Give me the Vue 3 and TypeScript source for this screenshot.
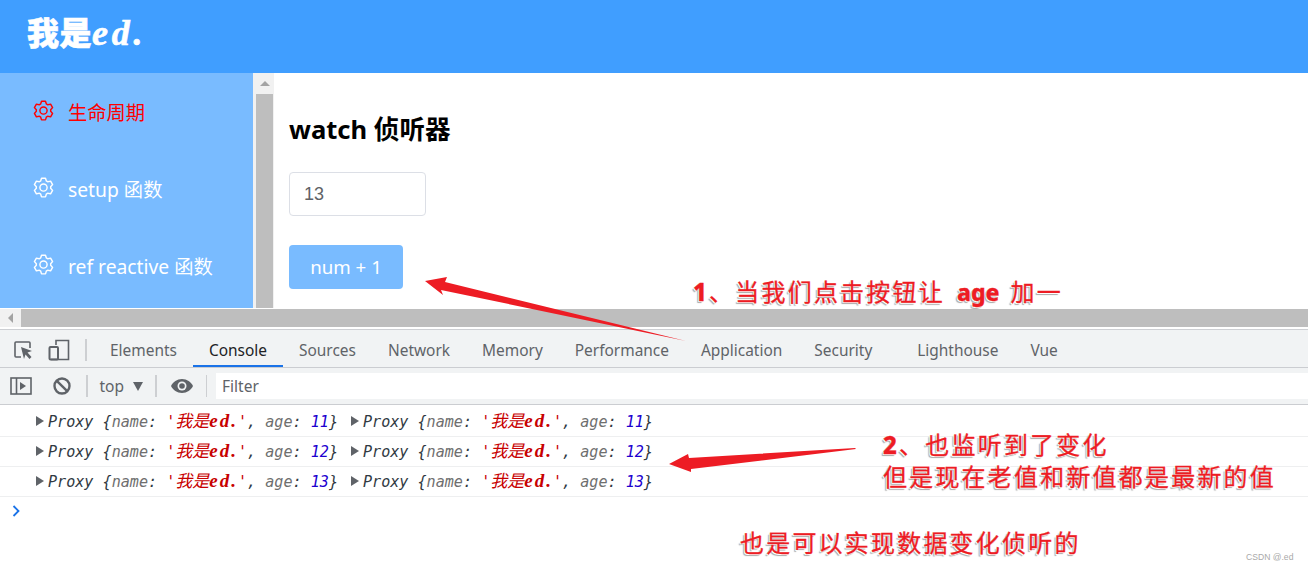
<script setup lang="ts">
import { ref } from 'vue'
const gear = 'M600.704 64a32 32 0 0 1 30.464 22.208l35.2 109.376c14.784 7.232 28.928 15.36 42.432 24.512l112.384-24.192a32 32 0 0 1 34.432 15.36L944.32 364.8a32 32 0 0 1-4.032 37.504l-77.12 85.12a357.12 357.12 0 0 1 0 49.024l77.12 85.248a32 32 0 0 1 4.032 37.504l-88.704 153.6a32 32 0 0 1-34.432 15.296L708.8 803.904c-13.44 9.088-27.648 17.28-42.368 24.512l-35.264 109.376A32 32 0 0 1 600.704 960H423.296a32 32 0 0 1-30.464-22.208L357.696 828.48a351.616 351.616 0 0 1-42.56-24.64l-112.32 24.256a32 32 0 0 1-34.432-15.36L79.68 659.2a32 32 0 0 1 4.032-37.504l77.12-85.248a357.12 357.12 0 0 1 0-48.896l-77.12-85.248A32 32 0 0 1 79.68 364.8l88.704-153.6a32 32 0 0 1 34.432-15.296l112.32 24.256c13.568-9.152 27.776-17.408 42.56-24.64l35.2-109.312A32 32 0 0 1 423.232 64H600.64zm-23.424 64H446.72l-36.352 113.088-24.512 11.968a294.113 294.113 0 0 0-34.816 20.096l-22.656 15.36-116.224-25.088-65.28 113.152 79.68 88.192-1.92 27.136a293.12 293.12 0 0 0 0 40.192l1.92 27.136-79.808 88.192 65.344 113.152 116.224-25.024 22.656 15.296a294.113 294.113 0 0 0 34.816 20.096l24.512 11.968L446.72 896h130.688l36.48-113.152 24.448-11.904a288.282 288.282 0 0 0 34.752-20.096l22.592-15.296 116.288 25.024 65.28-113.152-79.744-88.192 1.92-27.136a293.12 293.12 0 0 0 0-40.256l-1.92-27.136 79.808-88.128-65.344-113.152-116.288 24.96-22.592-15.232a287.616 287.616 0 0 0-34.752-20.096l-24.448-11.904L577.344 128zM512 320a192 192 0 1 1 0 384 192 192 0 0 1 0-384zm0 64a128 128 0 1 0 0 256 128 128 0 0 0 0-256z'
const menu = [
  { label: '生命周期', active: true },
  { label: 'setup 函数', active: false },
  { label: 'ref reactive 函数', active: false },
]
const tabs = ['Elements', 'Console', 'Sources', 'Network', 'Memory', 'Performance', 'Application', 'Security', 'Lighthouse', 'Vue']
const ages = [11, 12, 13]
const num = ref(13)
</script>

<template>
  <div class="page">
    <header class="top">
      <div class="logo">我是<i>ed.</i></div>
    </header>
    <div class="body">
      <aside class="aside">
        <div v-for="m in menu" :key="m.label" class="item" :class="{ active: m.active }">
          <svg class="gear" viewBox="0 0 1024 1024"><path fill="currentColor" :d="gear" /></svg>
          <span>{{ m.label }}</span>
        </div>
      </aside>
      <div class="vbar">
        <div class="vbtn"><span class="up"></span></div>
        <div class="vthumb"></div>
      </div>
      <main class="main">
        <h2 class="title">watch 侦听器</h2>
        <input v-model="num" class="num" />
        <button class="btn">num + 1</button>
      </main>
    </div>
    <div class="hbar">
      <div class="hbtn"><span class="left"></span></div>
      <div class="hthumb"></div>
    </div>
    <section class="dev">
      <div class="tabbar">
        <svg class="ic inspect" viewBox="0 0 20 20" width="20" height="20">
          <path d="M8 17H3a1 1 0 0 1-1-1V3a1 1 0 0 1 1-1h13a1 1 0 0 1 1 1v5" fill="none" stroke="#5f6368" stroke-width="1.6" />
          <path d="M8 7l11 4-4.5 1.6 4 4.4-2 2-4-4.4L11 19z" fill="#5f6368" />
        </svg>
        <svg class="ic device" viewBox="0 0 22 22" width="22" height="22">
          <path d="M8 6V1.5h12.500v19H3" fill="none" stroke="#5f6368" stroke-width="1.600" />
          <rect x="1.500" y="8" width="8.500" height="12.500" rx="1" fill="none" stroke="#5f6368" stroke-width="2" />
        </svg>
        <span class="sep first"></span>
        <div class="tabs">
          <span v-for="t in tabs" :key="t" class="tab" :class="{ on: t === 'Console', wide: t === 'Security' }">{{ t }}</span>
        </div>
      </div>
      <div class="filterbar">
        <svg class="ic side" viewBox="0 0 22 18" width="22" height="18">
          <rect x="1" y="1" width="20" height="16" fill="none" stroke="#5f6368" stroke-width="1.600" />
          <path d="M6.500 1v16" stroke="#5f6368" stroke-width="1.600" />
          <path d="M10 5l6 4-6 4z" fill="#5f6368" />
        </svg>
        <svg class="ic block" viewBox="0 0 18 18" width="18" height="18">
          <circle cx="9" cy="9" r="7.500" fill="none" stroke="#5f6368" stroke-width="2.400" />
          <path d="M3.800 3.800l10.400 10.400" stroke="#5f6368" stroke-width="2.400" />
        </svg>
        <span class="sep s2"></span>
        <span class="ctx">top</span>
        <span class="caret"></span>
        <span class="sep s3"></span>
        <svg class="ic eye" viewBox="0 0 24 16" width="24" height="16">
          <path d="M12 1C7 1 3 4 1 8c2 4 6 7 11 7s9-3 11-7c-2-4-6-7-11-7z" fill="#5f6368" />
          <circle cx="12" cy="8" r="4.500" fill="#f1f3f4" />
          <circle cx="12" cy="8" r="2.800" fill="#5f6368" />
        </svg>
        <span class="sep s4"></span>
        <div class="filter">Filter</div>
      </div>
      <div class="logs">
        <div v-for="a in ages" :key="a" class="row">
          <template v-for="n in 2" :key="n">
            <span class="tri"></span>
            <span class="obj">Proxy {<span class="k">name</span>: <span class="s">'<span class="zh">我是</span><b>ed.</b>'</span>, <span class="k">age</span>: <span class="v">{{ a }}</span>}</span>
          </template>
        </div>
        <div class="prompt">
          <svg viewBox="0 0 8 12" width="8" height="12"><path d="M1.500 1l5 5-5 5" fill="none" stroke="#1a73e8" stroke-width="1.800" /></svg>
        </div>
      </div>
    </section>

    <svg class="arrows" viewBox="0 0 1308 570" width="1308" height="570">
      <polygon points="425,281 447,277 445,282 686,341 441,290 443,295" fill="#ed1c24" />
      <polygon points="669,464 688,454 689,458 855,448 856,449 691,469 691,472" fill="#ed1c24" />
    </svg>
    <div class="note n1"><b>1</b>、当我们点击按钮让<span class="lat"><b>age</b></span>加一</div>
    <div class="note n2"><b>2</b>、也监听到了变化<br />但是现在老值和新值都是最新的值</div>
    <div class="note n3">也是可以实现数据变化侦听的</div>
    <div class="mark">CSDN @.ed</div>
  </div>
</template>

<style scoped>
.page {
  position: relative;
  width: 1308px;
  height: 570px;
  overflow: hidden;
  background: #fff;
  font-family: "Noto Sans", "Noto Sans CJK SC", sans-serif;
}
.top {
  height: 73px;
  background: #409eff;
  display: flex;
  align-items: center;
  padding-left: 27px;
}
.logo {
  color: #fff;
  font: 900 32px/1 "Noto Sans CJK SC", sans-serif;
  position: relative;
  top: -4px;
  letter-spacing: 0.5px;
  -webkit-text-stroke: 0.6px #fff;
}
.logo i {
  font: italic 700 36px/1 "Liberation Serif", serif;
  letter-spacing: 3.800px;
}
.body {
  height: 235px;
  display: flex;
  overflow: hidden;
}
.aside {
  width: 253px;
  background: #79bbff;
  flex: none;
}
.item {
  height: 77px;
  display: flex;
  align-items: center;
  padding-left: 32px;
  color: #fff;
  font-size: 19.300px;
}
.item.active {
  color: #f00;
}
.gear {
  width: 23px;
  height: 23px;
  margin-right: 13px;
  position: relative;
  top: -1px;
}
.vbar {
  width: 21px;
  box-sizing: border-box;
  flex: none;
  background: #f1f1f1;
  padding-left: 3px;
}
.vbtn {
  height: 21px;
  display: flex;
  justify-content: center;
  align-items: center;
}
.up {
  border: 5px solid transparent;
  border-top: 0;
  border-bottom: 5px solid #a3a3a3;
}
.vthumb {
  width: 17px;
  height: 214px;
  background: #bebebe;
}
.main {
  flex: 1;
  padding: 41px 0 0 15px;
  display: flex;
  flex-direction: column;
  align-items: flex-start;
}
.title {
  margin: 0 0 26px;
  font-size: 25.600px;
  line-height: 31px;
  padding-bottom: 1px;
  font-weight: 700;
  color: #000;
}
.num {
  width: 137px;
  height: 44px;
  box-sizing: border-box;
  border: 1px solid #dcdfe6;
  border-radius: 4px;
  padding: 0 14px;
  font: 18px "Liberation Sans", sans-serif;
  color: #606266;
  outline: none;
  margin-bottom: 29px;
}
.btn {
  width: 114px;
  height: 44px;
  border: 0;
  border-radius: 4px;
  padding: 0 0 2px;
  background: #79bbff;
  color: #fff;
  font: 18.700px "Noto Sans", sans-serif;
}
.hbar {
  margin-top: 1px;
  height: 18px;
  display: flex;
  background: #f1f1f1;
}
.hbtn {
  width: 21px;
  display: flex;
  align-items: center;
  justify-content: center;
}
.left {
  border: 5px solid transparent;
  border-left: 0;
  border-right: 5px solid #a3a3a3;
}
.hthumb {
  flex: 1;
  background: #bebebe;
}
.dev {
  margin-top: 2px;
  border-top: 1px solid #cdcfd3;
}
.tabbar {
  height: 37px;
  background: #f1f3f4;
  border-bottom: 1px solid #cbcdd1;
  display: flex;
  align-items: center;
}
.ic {
  flex: none;
}
.tabbar .ic,
.tabbar .sep {
  margin-top: 3px;
}
.inspect {
  margin-left: 13px;
}
.device {
  margin-left: 15px;
}
.sep {
  width: 1.5px;
  height: 22px;
  background: #cdcfd2;
  flex: none;
}
.sep.first {
  margin-left: 15px;
}
.tabs {
  display: flex;
  margin-left: 7.500px;
  height: 100%;
}
.tab {
  padding: 0 16px;
  height: 37px;
  line-height: 40px;
  font-size: 15.450px;
  color: #5f6368;
  box-sizing: border-box;
}
.tab.on {
  color: #202124;
  border-bottom: 2px solid #1a73e8;
}
.tab.wide {
  padding-right: 29px;
}
.filterbar {
  height: 36px;
  background: #f1f3f4;
  border-bottom: 1px solid #cbcdd1;
  display: flex;
  align-items: center;
  font-size: 15.500px;
  color: #5f6368;
}
.side {
  margin-left: 10px;
}
.block {
  margin-left: 21px;
}
.sep.s2 {
  margin-left: 15px;
}
.ctx {
  margin-left: 12px;
}
.caret {
  margin-left: 9px;
  border: 5px solid transparent;
  border-bottom: 0;
  border-top: 9px solid #5f6368;
}
.sep.s3 {
  margin-left: 12px;
}
.eye {
  margin-left: 13px;
}
.sep.s4 {
  margin-left: 12px;
}
.filter {
  margin-left: 9px;
  flex: 1;
  height: 26px;
  line-height: 26px;
  background: #fff;
  padding-left: 6px;
}
.logs {
  background: #fff;
  padding-top: 2px;
}
.row {
  height: 30px;
  box-sizing: border-box;
  border-bottom: 1px solid #eeeff0;
  display: flex;
  align-items: center;
  padding: 0 0 1px 36px;
  font: italic 15.100px/1 "DejaVu Sans Mono", "Noto Sans CJK SC", monospace;
  color: #303942;
  white-space: pre;
}
.tri {
  border: 5px solid transparent;
  border-right: 0;
  border-left: 8px solid #5f6368;
  margin-right: 4px;
}
.obj {
  margin-right: 13px;
}
.k {
  color: #6e6e6e;
}
.s {
  color: #c80000;
}
.zh {
  font-size: 17px;
}
.s b {
  font: italic 700 19px/1 "Liberation Serif", serif;
  letter-spacing: 2px;
}
.v {
  color: #1c00cf;
}
.prompt {
  height: 27px;
  display: flex;
  align-items: center;
  padding-left: 12px;
}
.arrows {
  position: absolute;
  left: 0;
  top: 0;
  pointer-events: none;
}
.note {
  position: absolute;
  color: #ed1c24;
  font-size: 24px;
  line-height: 31px;
  letter-spacing: 2.200px;
  white-space: pre;
  font-family: "Noto Sans CJK SC", sans-serif;
  -webkit-text-stroke: 0.3px #ed1c24;
  text-shadow: -1px 1px 0 #fff, -2px 2px 1px #a9a9a9, 1px -1px 0 #fff;
}
.note b {
  font-family: "Noto Sans", sans-serif;
  font-weight: 800;
}
.lat {
  letter-spacing: 0;
  font-size: 23px;
  margin: 0 11px 0 12px;
}
.n1 {
  left: 693px;
  top: 275px;
}
.n2 {
  left: 883px;
  top: 428px;
}
.n3 {
  left: 740px;
  top: 526px;
}
.mark {
  position: absolute;
  left: 1246px;
  top: 551px;
  font: 8.600px/12px "Liberation Sans", sans-serif;
  color: #a9a9a9;
}
</style>
